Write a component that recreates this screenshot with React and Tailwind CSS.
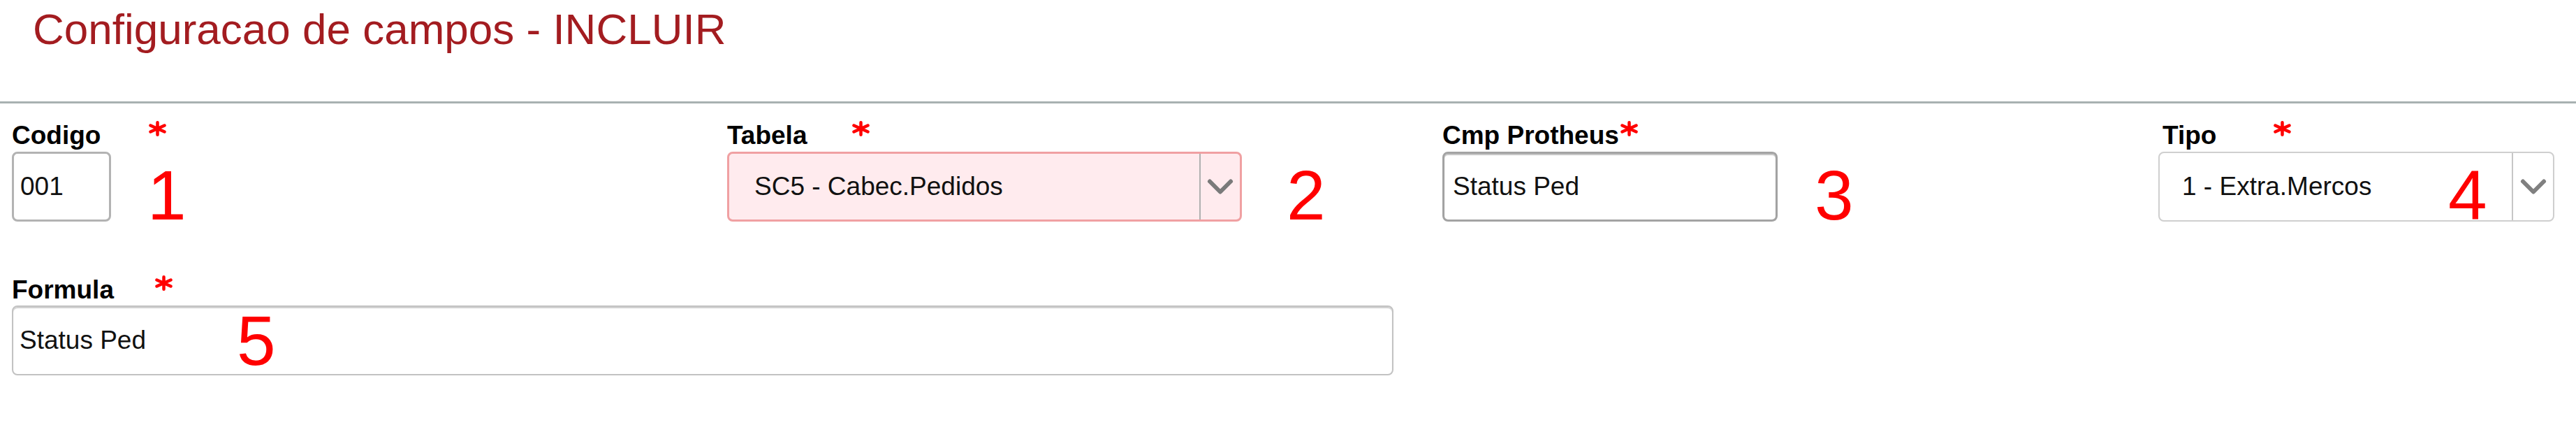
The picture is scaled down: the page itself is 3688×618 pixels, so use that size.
import React from 'react'
import { ChevronDown } from 'lucide-react'

// red "required" star next to each label
function Req({ className = '' }) {
  return (
    <svg width="25" height="22" viewBox="0 0 25 22" fill="none" stroke="#ff0000" strokeWidth="4.5" strokeLinecap="round" className={'shrink-0 ' + className}>
      <path d="M12.5 2.25v17.5M2.5 6.5l20 9M2.5 15.5l20-9" />
    </svg>
  )
}

function Label({ text, starClass, textClass = '' }) {
  return (
    <div className="flex items-start h-[42px] text-[37px] leading-[42px] font-bold text-black">
      <span className={textClass}>{text}</span>
      <Req className={starClass} />
    </div>
  )
}

function Mark({ n, className = '' }) {
  return <span className={'text-[100px] text-[#ff0000] ' + className}>{n}</span>
}

function Select({ value, width, boxClass, padClass, dividerClass, chevronColor }) {
  return (
    <div className={'flex h-[100px] rounded-[8px] ' + width + ' ' + boxClass}>
      <div className={'flex-1 flex items-center text-[37px] text-[#111] ' + padClass}>{value}</div>
      <div className={'flex items-center justify-center border-l-2 ' + dividerClass}>
        <ChevronDown size={60} strokeWidth={2.4} color={chevronColor} className="shrink-0" />
      </div>
    </div>
  )
}

export default function App() {
  return (
    <div className="w-full h-[618px] bg-white overflow-hidden font-[family-name:'Liberation_Sans',Arial,sans-serif]">
      {/* Header */}
      <h1 className="pl-[47px] pt-[7px] text-[62px] leading-[70px] font-normal text-[#a31c20]">
        Configuracao de campos - INCLUIR
      </h1>
      <div className="mt-[68px] h-[3px] bg-[#a8b1b1]" />

      {/* Row 1 */}
      <div className="mt-[25px] pl-[17px] grid grid-cols-[1024px_1024px_1025px_1fr]">
        <div>
          <Label text="Codigo" starClass="ml-[69px]" />
          <div className="mt-[2px] flex items-start">
            <input
              readOnly
              value="001"
              className="h-[100px] w-[142px] rounded-[8px] border-[3px] border-[#b3b3b3] pl-[9px] text-[37px] text-[#111] outline-none"
            />
            <Mark n="1" className="ml-[52px] h-[100px] leading-[124px]" />
          </div>
        </div>

        <div>
          <Label text="Tabela" starClass="ml-[65px]" />
          <div className="mt-[2px] flex items-start">
            <Select
              value="SC5 - Cabec.Pedidos"
              width="w-[737px]"
              boxClass="border-[3px] border-[#f0a0a2] bg-[#ffebee]"
              padClass="pl-[36px]"
              dividerClass="w-[58px] border-[#b0b0b0]"
              chevronColor="#7a7a7a"
            />
            <Mark n="2" className="ml-[64px] h-[100px] leading-[124px]" />
          </div>
        </div>

        <div>
          <Label text="Cmp Protheus" starClass="ml-[2px]" />
          <div className="mt-[2px] flex items-start">
            <input
              readOnly
              value="Status Ped"
              className="h-[100px] w-[480px] rounded-[8px] border-[3px] border-[#a3a3a3] shadow-[inset_0_2px_1px_#c4c4c4] pl-[12px] text-[37px] text-[#111] outline-none"
            />
            <Mark n="3" className="ml-[53px] h-[100px] leading-[124px]" />
          </div>
        </div>

        <div>
          <Label text="Tipo" textClass="ml-[6px]" starClass="ml-[82px]" />
          <div className="mt-[2px] relative w-[567px]">
            <Select
              value="1 - Extra.Mercos"
              width="w-[567px]"
              boxClass="border-2 border-[#cfcfcf] bg-white"
              padClass="pl-[32px]"
              dividerClass="w-[59px] border-[#c6c6c6]"
              chevronColor="#808080"
            />
            <Mark n="4" className="absolute left-[415px] top-[12px] leading-[100px]" />
          </div>
        </div>
      </div>

      {/* Row 2 */}
      <div className="mt-[77px] pl-[17px]">
        <Label text="Formula" starClass="ml-[59px]" />
        <div className="mt-[1px] relative w-[1978px]">
          <input
            readOnly
            value="Status Ped"
            className="h-[100px] w-full rounded-[8px] border-2 border-[#c2c2c2] shadow-[inset_0_2px_1px_#d0d0d0] pl-[9px] text-[37px] text-[#111] outline-none"
          />
          <Mark n="5" className="absolute left-[322px] top-0 leading-[100px]" />
        </div>
      </div>
    </div>
  )
}
